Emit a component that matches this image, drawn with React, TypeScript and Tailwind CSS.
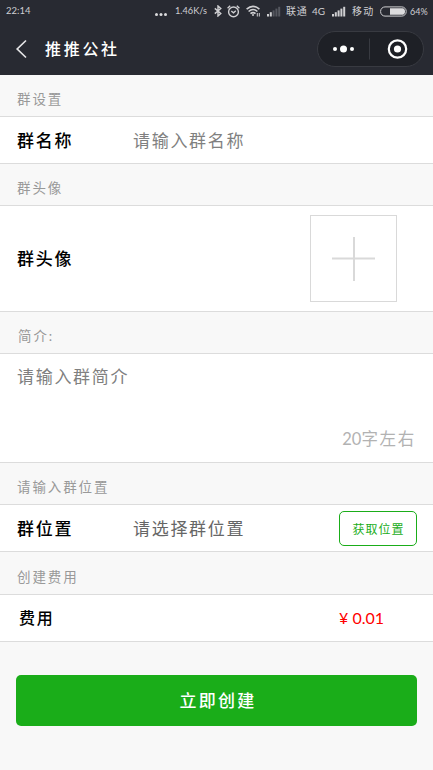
import React from 'react'
import clsx from 'clsx'

type TSectionProps = {
  title: string
  titleClass?: string
  className?: string
  children: React.ReactNode
}

const SignalIcon = ({ level }: { level: number }) => (
  <svg width="15" height="11" viewBox="0 0 15 11">
    {[0, 1, 2, 3, 4].map(i => (
      <rect
        key={i}
        x={1 + i * 2.8}
        y={8 - i * 1.8}
        width="2"
        height={2.5 + i * 1.8}
        fill={i < level ? '#cfcfd2' : '#55575f'}
      />
    ))}
  </svg>
)

const BluetoothIcon = () => (
  <svg width="8" height="12" viewBox="0 0 8 12" fill="none" stroke="#cfcfd2" strokeWidth="1.4">
    <path d="M0.8 3.4 L6.8 8.5 L4 11 V1 L6.8 3.5 L0.8 8.6" />
  </svg>
)

const AlarmIcon = () => (
  <svg width="13" height="13" viewBox="0 0 13 13" fill="none" stroke="#cfcfd2" strokeWidth="1.4">
    <circle cx="6.5" cy="6.9" r="4.9" />
    <path d="M0.6 3.2 L3.2 0.8 M12.4 3.2 L9.8 0.8 M4.3 6 L6.5 7.8 L8.8 5.8" />
  </svg>
)

const WifiIcon = () => (
  <svg width="15" height="12" viewBox="0 0 15 12" fill="none" stroke="#cfcfd2" strokeWidth="1.6">
    <path d="M0.6 4.2 Q7 -1.5 13.4 4.2 M2.6 6.5 Q7 2.5 11.4 6.5 M4.5 8.7 Q7 6.4 9.5 8.7" />
    <circle cx="7" cy="10.1" r="1" fill="#cfcfd2" stroke="none" />
    <path d="M11.3 8 V11.5 M13.3 8 V11.5" strokeWidth="1" />
  </svg>
)

const BatteryIcon = () => (
  <svg width="27" height="11" viewBox="0 0 27 11">
    <rect x="0.6" y="0.9" width="25.6" height="9.2" rx="4.4" fill="none" stroke="#cfcfd2" />
    <path d="M10 2.2 H22.5 Q25 2.4 25 5.5 Q25 8.6 22.5 8.8 H10 Z" fill="#dcdcde" />
  </svg>
)

function StatusBar() {
  return (
    <div className="flex h-[22px] items-center pl-[6px] text-[10px] leading-none whitespace-nowrap text-[#cfcfd2] [&_svg]:shrink-0">
      <span className="w-[148px] shrink-0 text-[9.5px]">22:14</span>
      <svg width="14" height="10" viewBox="0 0 14 10" fill="#dcdcde">
        <circle cx="2.5" cy="8.5" r="1.5" />
        <circle cx="7" cy="8.5" r="1.5" />
        <circle cx="11.5" cy="8.5" r="1.5" />
      </svg>
      <span className="ml-[7px] w-[39px] shrink-0 text-[9.2px]">1.46K/s</span>
      <BluetoothIcon />
      <span className="ml-[5px]">
        <AlarmIcon />
      </span>
      <span className="ml-[6px]">
        <WifiIcon />
      </span>
      <span className="ml-[5px]">
        <SignalIcon level={2} />
      </span>
      <span className="ml-[5px] w-[26px] shrink-0 tracking-[0.8px]">联通</span>
      <span className="w-[19px] shrink-0">4G</span>
      <SignalIcon level={5} />
      <span className="ml-[6px] w-[28px] shrink-0 tracking-[1.2px]">移动</span>
      <BatteryIcon />
      <span className="ml-[3px] text-[9px]">64%</span>
    </div>
  )
}

function NavBar() {
  return (
    <div className="flex h-[53px] items-center pr-[9px] pl-[15px]">
      <svg width="13" height="20" viewBox="0 0 13 20" fill="none" stroke="#e4e4e6" strokeWidth="1.7">
        <path d="M11 1.5 L2.2 10 L11 18.5" />
      </svg>
      <h1 className="ml-[17px] flex-1 pt-px text-[16px] font-medium tracking-[2.7px] text-white">
        推推公社
      </h1>
      <div className="flex h-[36px] w-[107px] items-center rounded-full border border-[#383a41] bg-[#1e2026]">
        <svg width="105" height="34" viewBox="0 0 105 34" fill="#fff">
          <circle cx="17" cy="17" r="2" />
          <circle cx="25.5" cy="17" r="3.5" />
          <circle cx="34" cy="17" r="2" />
          <rect x="51" y="6.5" width="1" height="21" fill="#383a41" />
          <circle cx="79.5" cy="17" r="8.7" fill="none" stroke="#fff" strokeWidth="2.2" />
          <circle cx="79.5" cy="17" r="3.6" />
        </svg>
      </div>
    </div>
  )
}

function Section({ title, titleClass, className, children }: TSectionProps) {
  return (
    <section>
      <h2
        className={clsx(
          'flex items-center pt-[8px] text-[13.5px] tracking-[1.9px] text-[#999]',
          titleClass || 'h-[41px] pl-[17px]'
        )}
      >
        {title}
      </h2>
      <div className={clsx('flex border-y border-[#dcdcdc] bg-white px-[17px]', className)}>
        {children}
      </div>
    </section>
  )
}

const Label = ({ children }: { children: React.ReactNode }) => (
  <span className="w-[116px] pt-px text-[17px] font-medium tracking-[1.7px] text-black">
    {children}
  </span>
)

export default function App() {
  return (
    <div className="h-[770px] w-[433px] overflow-hidden bg-[#f8f8f8] font-['Lato','Noto_Sans_CJK_SC',sans-serif]">
      <header className="h-[75px] bg-[#282a32]">
        <StatusBar />
        <NavBar />
      </header>

      <Section title="群设置" className="h-[48px] items-center">
        <Label>群名称</Label>
        <span className="pt-px text-[17px] tracking-[1.7px] text-[#808080]">请输入群名称</span>
      </Section>

      <Section title="群头像" className="h-[107px] items-center justify-between">
        <Label>群头像</Label>
        <button className="mr-[19px] flex h-[87px] w-[87px] items-center justify-center border border-[#d9d9d9]">
          <svg width="43" height="44" viewBox="0 0 43 44" stroke="#d9d9d9" strokeWidth="2">
            <path d="M22 0 V44 M0 21.5 H43" />
          </svg>
        </button>
      </Section>

      <Section
        title="简介:"
        titleClass="h-[41px] pl-[18px]"
        className="h-[110px] flex-col justify-between"
      >
        <span className="pt-[10px] text-[17px] tracking-[1.7px] text-[#808080]">请输入群简介</span>
        <span className="pb-[10px] text-right text-[16.5px] tracking-[1.7px] text-[#b2b2b2]">
          <span className="tracking-normal">20</span>字左右
        </span>
      </Section>

      <Section title="请输入群位置" className="h-[48px] items-center">
        <Label>群位置</Label>
        <span className="flex-1 pt-px text-[17px] tracking-[1.7px] text-[#666]">请选择群位置</span>
        <button className="-mr-px h-[35px] w-[78px] rounded-[5px] border border-[#1aad19] pt-[3px] pl-px text-[12px] tracking-[1px] text-[#1aad19]">
          获取位置
        </button>
      </Section>

      <Section
        title="创建费用"
        titleClass="h-[42px] pl-[17px]"
        className="h-[48px] items-center justify-between"
      >
        <span className="pl-[2px] text-[16px] font-medium tracking-[1.7px] text-black">费用</span>
        <span className="mr-[32px] text-[16px] text-[#f00]">¥ 0.01</span>
      </Section>

      <div className="px-4 pt-[33px]">
        <button className="h-[51px] w-full rounded-[5px] bg-[#1aad19] pt-px pl-[3px] text-[17px] font-medium tracking-[2.2px] text-white">
          立即创建
        </button>
      </div>
    </div>
  )
}
